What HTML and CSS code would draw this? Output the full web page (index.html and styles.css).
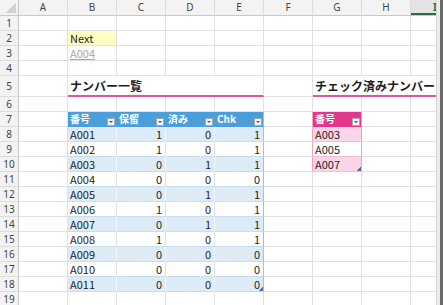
FILE: index.html
```html
<!DOCTYPE html>
<html lang="ja">
<head>
    <meta charset="UTF-8">
    <meta name="viewport" content="width=device-width, initial-scale=1.0">
    <title>ナンバー一覧</title>
    <link rel="stylesheet" href="styles.css">
</head>
<body>
    <div class="screen">
        <div class="sheet">
            <!-- column headers -->
            <div class="corner"></div>
            <div class="col-head">A</div>
            <div class="col-head">B</div>
            <div class="col-head">C</div>
            <div class="col-head">D</div>
            <div class="col-head">E</div>
            <div class="col-head">F</div>
            <div class="col-head">G</div>
            <div class="col-head">H</div>
            <div class="col-head active">I</div>

            <!-- 1 -->
            <div class="row-head">1</div>
            <div class="cell"></div><div class="cell"></div><div class="cell"></div><div class="cell"></div><div class="cell"></div>
            <div class="cell"></div><div class="cell"></div><div class="cell"></div><div class="cell"></div>

            <!-- 2 -->
            <div class="row-head">2</div>
            <div class="cell"></div>
            <div class="cell next">Next</div>
            <div class="cell"></div><div class="cell"></div><div class="cell"></div>
            <div class="cell"></div><div class="cell"></div><div class="cell"></div><div class="cell"></div>

            <!-- 3 -->
            <div class="row-head">3</div>
            <div class="cell"></div>
            <div class="cell link">A004</div>
            <div class="cell"></div><div class="cell"></div><div class="cell"></div>
            <div class="cell"></div><div class="cell"></div><div class="cell"></div><div class="cell"></div>

            <!-- 4 -->
            <div class="row-head">4</div>
            <div class="cell"></div><div class="cell"></div><div class="cell"></div><div class="cell"></div><div class="cell"></div>
            <div class="cell"></div><div class="cell"></div><div class="cell"></div><div class="cell"></div>

            <!-- 5 -->
            <div class="row-head tall">5</div>
            <div class="cell"></div>
            <div class="cell title span4">ナンバー一覧</div>
            <div class="cell"></div>
            <div class="cell title span3">チェック済みナンバー</div>

            <!-- 6 -->
            <div class="row-head">6</div>
            <div class="cell"></div><div class="cell"></div><div class="cell"></div><div class="cell"></div><div class="cell"></div>
            <div class="cell"></div><div class="cell"></div><div class="cell"></div><div class="cell"></div>

            <!-- 7 -->
            <div class="row-head">7</div>
            <div class="cell"></div>
            <div class="cell th"><span>番号</span><span class="filter"></span></div>
            <div class="cell th"><span>保留</span><span class="filter"></span></div>
            <div class="cell th"><span>済み</span><span class="filter"></span></div>
            <div class="cell th tb-end"><span>Chk</span><span class="filter"></span></div>
            <div class="cell pk-left"></div>
            <div class="cell th pink"><span>番号</span><span class="filter"></span></div>
            <div class="cell"></div><div class="cell"></div>

            <!-- 8 -->
            <div class="row-head">8</div>
            <div class="cell"></div>
            <div class="cell band">A001</div>
            <div class="cell band num">1</div>
            <div class="cell band num">0</div>
            <div class="cell band num tb-end">1</div>
            <div class="cell pk-left"></div>
            <div class="cell pband">A003</div>
            <div class="cell"></div><div class="cell"></div>

            <!-- 9 -->
            <div class="row-head">9</div>
            <div class="cell"></div>
            <div class="cell body">A002</div>
            <div class="cell body num">1</div>
            <div class="cell body num">0</div>
            <div class="cell body num tb-end">1</div>
            <div class="cell pk-left"></div>
            <div class="cell pbody">A005</div>
            <div class="cell"></div><div class="cell"></div>

            <!-- 10 -->
            <div class="row-head">10</div>
            <div class="cell"></div>
            <div class="cell band">A003</div>
            <div class="cell band num">0</div>
            <div class="cell band num">1</div>
            <div class="cell band num tb-end">1</div>
            <div class="cell pk-left"></div>
            <div class="cell pband grip-pink">A007</div>
            <div class="cell"></div><div class="cell"></div>

            <!-- 11 -->
            <div class="row-head">11</div>
            <div class="cell"></div>
            <div class="cell body">A004</div>
            <div class="cell body num">0</div>
            <div class="cell body num">0</div>
            <div class="cell body num tb-end">0</div>
            <div class="cell"></div><div class="cell"></div><div class="cell"></div><div class="cell"></div>

            <!-- 12 -->
            <div class="row-head">12</div>
            <div class="cell"></div>
            <div class="cell band">A005</div>
            <div class="cell band num">0</div>
            <div class="cell band num">1</div>
            <div class="cell band num tb-end">1</div>
            <div class="cell"></div><div class="cell"></div><div class="cell"></div><div class="cell"></div>

            <!-- 13 -->
            <div class="row-head">13</div>
            <div class="cell"></div>
            <div class="cell body">A006</div>
            <div class="cell body num">1</div>
            <div class="cell body num">0</div>
            <div class="cell body num tb-end">1</div>
            <div class="cell"></div><div class="cell"></div><div class="cell"></div><div class="cell"></div>

            <!-- 14 -->
            <div class="row-head">14</div>
            <div class="cell"></div>
            <div class="cell band">A007</div>
            <div class="cell band num">0</div>
            <div class="cell band num">1</div>
            <div class="cell band num tb-end">1</div>
            <div class="cell"></div><div class="cell"></div><div class="cell"></div><div class="cell"></div>

            <!-- 15 -->
            <div class="row-head">15</div>
            <div class="cell"></div>
            <div class="cell body">A008</div>
            <div class="cell body num">1</div>
            <div class="cell body num">0</div>
            <div class="cell body num tb-end">1</div>
            <div class="cell"></div><div class="cell"></div><div class="cell"></div><div class="cell"></div>

            <!-- 16 -->
            <div class="row-head">16</div>
            <div class="cell"></div>
            <div class="cell band">A009</div>
            <div class="cell band num">0</div>
            <div class="cell band num">0</div>
            <div class="cell band num tb-end">0</div>
            <div class="cell"></div><div class="cell"></div><div class="cell"></div><div class="cell"></div>

            <!-- 17 -->
            <div class="row-head">17</div>
            <div class="cell"></div>
            <div class="cell body">A010</div>
            <div class="cell body num">0</div>
            <div class="cell body num">0</div>
            <div class="cell body num tb-end">0</div>
            <div class="cell"></div><div class="cell"></div><div class="cell"></div><div class="cell"></div>

            <!-- 18 -->
            <div class="row-head">18</div>
            <div class="cell"></div>
            <div class="cell band">A011</div>
            <div class="cell band num">0</div>
            <div class="cell band num">0</div>
            <div class="cell band num tb-end grip">0</div>
            <div class="cell"></div><div class="cell"></div><div class="cell"></div><div class="cell"></div>

            <!-- 19 -->
            <div class="row-head">19</div>
            <div class="cell"></div><div class="cell"></div><div class="cell"></div><div class="cell"></div><div class="cell"></div>
            <div class="cell"></div><div class="cell"></div><div class="cell"></div><div class="cell"></div>
        </div>
        <div class="vbar"></div>
    </div>
</body>
</html>
```

FILE: styles.css
```css
* {
    margin: 0;
    padding: 0;
    box-sizing: border-box;
}
body {
    font-family: 'Noto Sans CJK JP', 'Noto Sans', sans-serif;
    font-size: 11px;
    color: #1e1e1e;
    background: #fff;
}
.screen {
    display: flex;
    width: 443px;
    height: 305px;
    overflow: hidden;
}
.sheet {
    flex: none;
    width: 436px;
    display: grid;
    grid-template-columns: 19px repeat(9, 49px);
    grid-template-rows: 16px repeat(4, 15px) 21px repeat(14, 15px);
    overflow: hidden;
}
.vbar {
    flex: 1;
    background: linear-gradient(to right, #d6d6d6 0 1px, #ececec 1px 4px, #6b6b6b 4px);
}

/* headers */
.corner {
    background-color: #f3f3f3;
    background-image: linear-gradient(135deg, transparent 50%, #d2d2d2 50%);
    background-size: 10px 10px;
    background-position: right 2px bottom 2px;
    background-repeat: no-repeat;
    border-right: 1px solid #c8c8c8;
    border-bottom: 1px solid #c8c8c8;
}
.col-head {
    background: #f3f3f3;
    border-right: 1px solid #dcdcdc;
    border-bottom: 1px solid #c8c8c8;
    text-align: center;
    font-family: 'Noto Sans', sans-serif;
    font-size: 10px;
    line-height: 15px;
    color: #444;
}
.col-head.active {
    background: #e4e4e4;
    color: #217346;
    font-weight: 700;
    box-shadow: inset 0 -2px 0 #217346;
}
.row-head {
    background: #f3f3f3;
    border-right: 1px solid #c8c8c8;
    border-bottom: 1px solid #dcdcdc;
    text-align: center;
    font-family: 'Noto Sans', sans-serif;
    font-size: 10px;
    line-height: 14px;
    color: #444;
}
.row-head.tall {
    line-height: 20px;
}

/* cells */
.cell {
    border-right: 1px solid #e1e1e1;
    border-bottom: 1px solid #e1e1e1;
    padding: 0 2px;
    line-height: 15px;
    white-space: nowrap;
    overflow: hidden;
}
.next {
    background: #ffffc4;
}
.link {
    color: #a6a6a6;
    text-decoration: underline;
}
.title {
    font-size: 12px;
    font-weight: 700;
    line-height: 19px;
    border-bottom: 2px solid #e2559d;
}
.span4 {
    grid-column: span 4;
}
.span3 {
    grid-column: span 3;
}

/* list table */
.th {
    display: flex;
    justify-content: space-between;
    align-items: flex-start;
    padding: 1px 1px 1px 2px;
    background: #4a9fdb;
    border-right-color: #4a9fdb;
    border-bottom-color: #4a9fdb;
    color: #fff;
    font-weight: 700;
    font-size: 10px;
    line-height: 11px;
    overflow: visible;
}
.th.pink {
    background: #e2378d;
    border-right-color: #f0a3c7;
    border-bottom-color: #e2378d;
}
.filter {
    position: relative;
    align-self: flex-end;
    flex: none;
    width: 8px;
    height: 8px;
    margin-bottom: -1px;
    background: #f4f4f4;
    border: 1px solid #a8a8a8;
}
.filter::after {
    content: '';
    position: absolute;
    left: 1px;
    top: 2px;
    border-left: 2px solid transparent;
    border-right: 2px solid transparent;
    border-top: 2px solid #555;
}
.band {
    background: #ddebf7;
    border-right-color: #f1f7fc;
    border-bottom-color: #c9ddf0;
}
.body {
    border-bottom-color: #c9ddf0;
}
.num {
    text-align: right;
    padding-right: 3px;
}
.tb-end {
    border-right-color: #9bc2e6;
}
.grip {
    background-image: linear-gradient(135deg, transparent 50%, #4a6fc5 50%);
    background-size: 4px 4px;
    background-position: right 0 bottom 0;
    background-repeat: no-repeat;
}

/* checked table */
.pk-left {
    border-right-color: #f0a3c7;
}
.pband {
    background: #fcd5e8;
    border-right-color: #f0a3c7;
    border-bottom-color: #f5bed8;
}
.pbody {
    border-right-color: #f0a3c7;
    border-bottom-color: #f5bed8;
}
.grip-pink {
    background-image: linear-gradient(135deg, transparent 50%, #5a63c8 50%);
    background-size: 4px 4px;
    background-position: right 0 bottom 0;
    background-repeat: no-repeat;
}
```
